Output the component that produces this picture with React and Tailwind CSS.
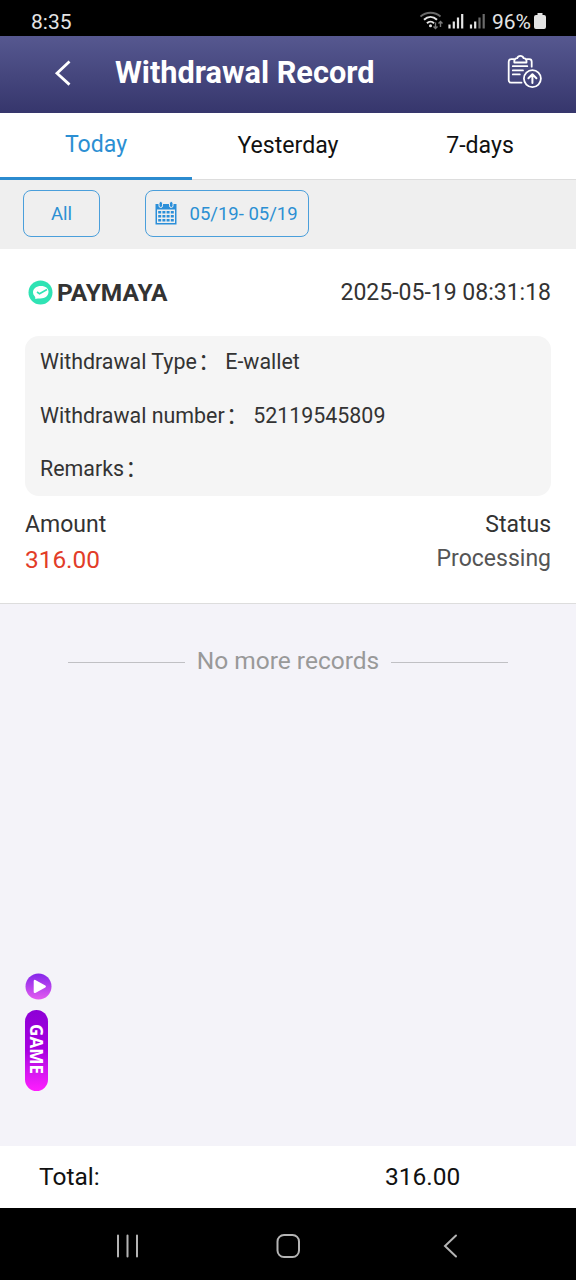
import React from "react";

function StatusBar() {
  return (
    <div className="flex h-9 shrink-0 items-center bg-black pr-[30px] pl-[31px] text-[21px] leading-[36px] text-[#e4e4e4]">
      <span className="pt-[7px]">8:35</span>
      <svg className="mt-[6px] ml-auto" width="66" height="20" viewBox="0 0 66 20" fill="none" strokeLinecap="butt">
        <path d="M0.500 5.500C6 0.500 15 0.500 20.500 5.500" stroke="#6a6a6a" strokeWidth="1.800" />
        <path d="M4 8.800C8 5 13 5 17 8.800" stroke="#e4e4e4" strokeWidth="2" />
        <path d="M7 12.200C9 10.200 12 10.200 14 12.200" stroke="#e4e4e4" strokeWidth="2" />
        <circle cx="10.500" cy="14.800" r="1.500" fill="#e4e4e4" />
        <path d="M15.500 11.500v6m-2-2 2 2 2-2M20.500 16V10.500m-2 2 2-2 2 2" stroke="#7a7a7a" strokeWidth="1.400" />
        <path d="M29.500 17.500v-4M33.800 17.500v-7M38 17.500V6.500M42.200 17.500V3M51 17.500v-4M55.200 17.500v-7" stroke="#e4e4e4" strokeWidth="2.200" />
        <path d="M59.500 17.500V6.500M63.700 17.500V3" stroke="#6a6a6a" strokeWidth="2.200" />
      </svg>
      <span className="ml-[6px] pt-[7px]">96%</span>
      <svg className="mt-[6px] ml-[3px] shrink-0" width="12" height="18" viewBox="0 0 12 18">
        <path d="M3.500 1h5v2H10a2 2 0 0 1 2 2v10a2 2 0 0 1-2 2H2a2 2 0 0 1-2-2V5a2 2 0 0 1 2-2h1.500z" fill="#e4e4e4" />
      </svg>
    </div>
  );
}

function Header() {
  return (
    <header className="flex h-[77px] shrink-0 items-center bg-linear-to-b from-[#565890] to-[#36366c] pr-[33px] pb-[4px] pl-[54px]">
      <svg width="18" height="26" viewBox="0 0 18 26" fill="none" stroke="#fff" strokeWidth="2.800">
        <path d="M15.500 1.500 3 13.300l12.500 11.300" />
      </svg>
      <h1 className="ml-[43px] text-[30.700px] leading-[40px] font-bold whitespace-nowrap text-white">Withdrawal Record</h1>
      <svg className="mb-px ml-auto" width="36" height="36" viewBox="0 0 36 36" fill="none" stroke="#fff" strokeWidth="1.800" strokeLinecap="round" strokeLinejoin="round">
        <path d="M7 5.200H4.200A2.500 2.500 0 0 0 1.700 7.700v18.500a2.500 2.500 0 0 0 2.500 2.500H14.500M19.800 5.200h2.400A2.500 2.500 0 0 1 24.700 7.700v5" />
        <path d="M7.300 8.500c-.4-2.700.6-3.900 2.900-4.300a3.400 3.400 0 0 1 6.400 0c2.300.4 3.300 1.600 2.900 4.300z" />
        <path d="M5.800 12.200h14.500M5.800 16.400h10.200M5.800 20.400h7" />
        <circle cx="25.400" cy="24.600" r="8.500" />
        <path d="M25.400 29v-8.500m-4 3.800 4-4 4 4" strokeWidth="2" />
      </svg>
    </header>
  );
}

function Tabs() {
  return (
    <nav className="grid h-[67px] shrink-0 grid-cols-3 bg-white text-center text-[23.100px] leading-[65px] text-[#111]">
      <span className="border-b-[3px] border-[#2b8bcf] leading-[63px] text-[#2b8fd3]">Today</span>
      <span className="border-b border-[#ddd]">Yesterday</span>
      <span className="border-b border-[#ddd]">7-days</span>
    </nav>
  );
}

function CalendarIcon() {
  return (
    <svg width="22" height="24" viewBox="0 0 22 24" fill="#2b8fd9">
      <path d="M0.500 3h21v20.500h-21z" />
      <rect x="2" y="8.500" width="18" height="13.500" fill="#efefef" />
      <path d="M3.200 10h3v2.500h-3zM7.400 10h3v2.500h-3zM11.600 10h3v2.500h-3zM15.800 10h3v2.500h-3zM3.200 14h3v2.500h-3zM7.400 14h3v2.500h-3zM11.600 14h3v2.500h-3zM15.800 14h3v2.500h-3zM3.200 18h3v2.500h-3zM7.400 18h3v2.500h-3zM11.600 18h3v2.500h-3zM15.800 18h3v2.500h-3z" />
      <rect x="4" y="0.500" width="3.500" height="6" rx="1.700" stroke="#efefef" />
      <rect x="14.500" y="0.500" width="3.500" height="6" rx="1.700" stroke="#efefef" />
    </svg>
  );
}

function Filters() {
  return (
    <div className="flex h-[69px] shrink-0 items-start bg-[#efefef] pt-[10px] pl-[23px] text-[18.500px] leading-[46px] text-[#2b8fd3]">
      <button className="h-[47px] w-[77px] rounded-[8px] border border-[#4a9fdb]">All</button>
      <button className="ml-[45px] flex h-[47px] w-[164px] items-center rounded-[8px] border border-[#4a9fdb] pl-[9px]">
        <span className="-mt-px">
          <CalendarIcon />
        </span>
        <span className="ml-[12.500px] leading-[44px] whitespace-nowrap">05/19- 05/19</span>
      </button>
    </div>
  );
}

function DetailRow({ label, value }) {
  return (
    <div className="flex h-[53.500px]">
      <span>{label}</span>
      <span className="ml-[1.500px] w-[27px]">{"\uFF1A"}</span>
      <span>{value}</span>
    </div>
  );
}

function Record() {
  return (
    <section className="flex h-[355px] shrink-0 flex-col border-b border-[#ddd] bg-white px-[25px] text-[23px] text-[#333]">
      <div className="flex h-[87px] items-center">
        <svg className="ml-[3px]" width="25" height="25" viewBox="0 0 25 25">
          <circle cx="12.500" cy="12.500" r="12" fill="#2fe3b4" />
          <path d="M5 12.500C5 8.500 8.500 6 13 6s7.500 2.200 7.500 5.800c0 4.200-3.500 6.700-8 6.700-1.800 0-3.200.2-5.500.2.500-1 .3-1.700-.5-2.700A5.500 5.500 0 0 1 5 12.500z" fill="#fff" />
          <path d="m9 12 2.500 1.700L19 9.500" fill="none" stroke="#2fe3b4" strokeWidth="1.600" />
        </svg>
        <span className="mt-[2px] ml-[4px] text-[24.500px] font-bold">PAYMAYA</span>
        <span className="mt-[2px] ml-auto">2025-05-19 08:31:18</span>
      </div>
      <div className="h-[160px] rounded-[14px] bg-[#f5f5f5] pl-[15px] text-[21.400px] leading-[52px]">
        <DetailRow label="Withdrawal Type" value="E-wallet" />
        <DetailRow label="Withdrawal number" value="52119545809" />
        <DetailRow label="Remarks" value="" />
      </div>
      <div className="mt-[12px] flex justify-between leading-[34px]">
        <div>
          <div>Amount</div>
          <div className="text-[24.400px] leading-[35px] text-[#e23c28]">316.00</div>
        </div>
        <div className="text-right">
          <div>Status</div>
          <div className="text-[#555]">Processing</div>
        </div>
      </div>
    </section>
  );
}

function GameWidget() {
  return (
    <div className="absolute top-[973px] left-[25px] flex flex-col items-start">
      <svg width="27" height="27" viewBox="0 0 27 27">
        <defs>
          <linearGradient id="play" x1="0" y1="0" x2="0" y2="1">
            <stop offset="0" stopColor="#8426ea" />
            <stop offset="1" stopColor="#e45cf0" />
          </linearGradient>
        </defs>
        <circle cx="13.500" cy="13.500" r="13" fill="url(#play)" />
        <path d="M9.800 8v11l10-5.500z" fill="#fff" stroke="#fff" strokeWidth="2.200" strokeLinejoin="round" />
      </svg>
      <div className="mt-[10px] flex h-[81px] w-[23px] items-center justify-center rounded-full bg-linear-to-b from-[#8d00d6] via-[#a800e0] to-[#ff1cff] pb-[2px] font-['Open_Sans','Noto_Sans',sans-serif] text-[17.200px] leading-[23px] font-bold text-white [writing-mode:vertical-rl]">
        GAME
      </div>
    </div>
  );
}

function NavBar() {
  return (
    <div className="h-[72px] shrink-0 bg-black">
      <svg width="576" height="72" viewBox="0 0 576 72" fill="none" stroke="#b4b4b4" strokeWidth="2" strokeLinecap="round">
        <path d="M118 27.500v21M127.500 27.500v21M137 27.500v21" />
        <rect x="277.500" y="27" width="21.500" height="22" rx="6.500" />
        <path d="M456 27.500 445 38l11 10.500" />
      </svg>
    </div>
  );
}

export default function App() {
  return (
    <div className="relative flex h-[1280px] w-[576px] flex-col overflow-hidden bg-[#f4f3f9] font-['Roboto','Noto_Sans_CJK_SC',sans-serif]">
      <StatusBar />
      <Header />
      <Tabs />
      <Filters />
      <Record />
      <div className="flex items-center justify-center gap-3 pt-[39px] text-[24.500px] leading-[36px] text-[#999]">
        <span className="mt-[3px] h-[1.500px] w-[117px] bg-[#c0c0c4]" />
        <span>No more records</span>
        <span className="mt-[3px] h-[1.500px] w-[117px] bg-[#c0c0c4]" />
      </div>
      <div className="mt-auto flex h-[62px] shrink-0 bg-white pl-[39px] text-[24.500px] leading-[62px] text-[#111]">
        <span className="w-[346px]">Total:</span>
        <span>316.00</span>
      </div>
      <NavBar />
      <GameWidget />
    </div>
  );
}
